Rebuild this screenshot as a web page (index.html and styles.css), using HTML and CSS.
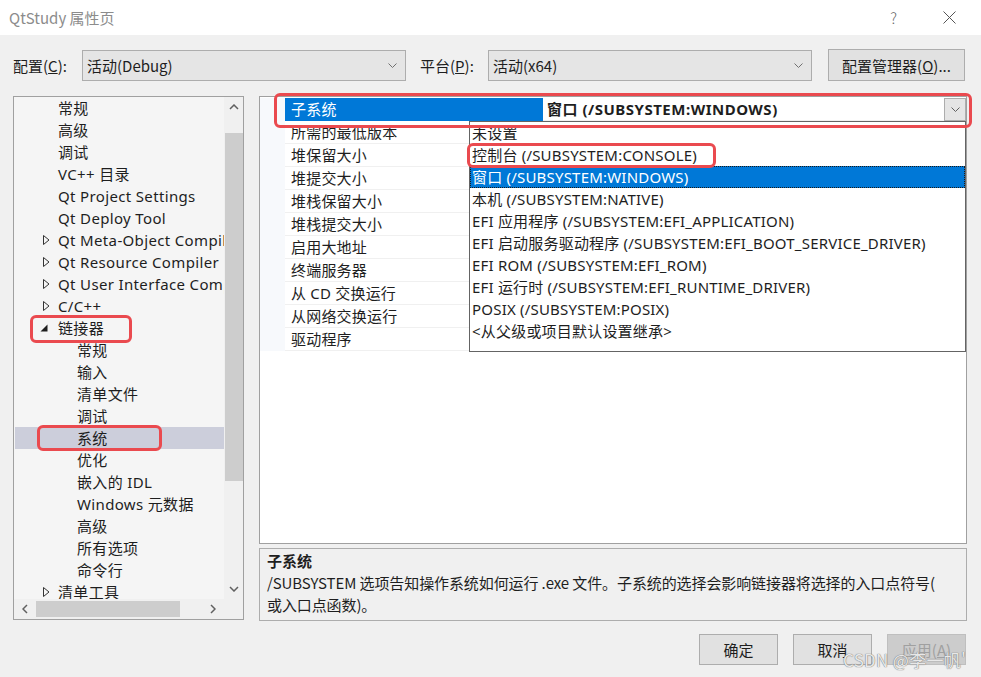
FILE: index.html
```html
<!DOCTYPE html>
<html lang="zh-CN">
<head>
  <meta charset="UTF-8">
  <title>QtStudy 属性页</title>
  <link rel="stylesheet" href="styles.css">
</head>
<body>
<div class="dialog">

  <!-- title bar -->
  <div class="titlebar">
    <span class="title">QtStudy 属性页</span>
    <span class="help">?</span>
    <span class="close">
      <svg width="13" height="13" viewBox="0 0 13 13"><path d="M0.5 0.5L12.5 12.5M12.5 0.5L0.5 12.5" stroke="#555" stroke-width="1" fill="none"/></svg>
    </span>
  </div>

  <!-- configuration / platform -->
  <div class="config-row">
    <label class="lbl lbl-cfg">配置(<u>C</u>):</label>
    <div class="combo">
      <span>活动(Debug)</span>
      <svg class="chev" width="9" height="5" viewBox="0 0 9 5"><polyline points="0.5,0.5 4.5,4.5 8.5,0.5" stroke="#707070" fill="none"/></svg>
    </div>
    <label class="lbl lbl-plat">平台(<u>P</u>):</label>
    <div class="combo">
      <span>活动(x64)</span>
      <svg class="chev" width="9" height="5" viewBox="0 0 9 5"><polyline points="0.5,0.5 4.5,4.5 8.5,0.5" stroke="#707070" fill="none"/></svg>
    </div>
    <button class="btn btn-mgr">配置管理器(<u>O</u>)...</button>
  </div>

  <div class="main">
    <!-- left tree -->
    <div class="tree">
      <ul class="tree-list">
        <li class="l1"><span class="tog"></span>常规</li>
        <li class="l1"><span class="tog"></span>高级</li>
        <li class="l1"><span class="tog"></span>调试</li>
        <li class="l1"><span class="tog"></span>VC++ 目录</li>
        <li class="l1"><span class="tog"></span>Qt Project Settings</li>
        <li class="l1"><span class="tog"></span>Qt Deploy Tool</li>
        <li class="l1"><span class="tog"><svg width="7" height="10" viewBox="0 0 7 10"><polygon points="0.5,0.5 6,5 0.5,9.5" stroke="#333" fill="none"/></svg></span>Qt Meta-Object Compiler</li>
        <li class="l1"><span class="tog"><svg width="7" height="10" viewBox="0 0 7 10"><polygon points="0.5,0.5 6,5 0.5,9.5" stroke="#333" fill="none"/></svg></span>Qt Resource Compiler</li>
        <li class="l1"><span class="tog"><svg width="7" height="10" viewBox="0 0 7 10"><polygon points="0.5,0.5 6,5 0.5,9.5" stroke="#333" fill="none"/></svg></span>Qt User Interface Compiler</li>
        <li class="l1"><span class="tog"><svg width="7" height="10" viewBox="0 0 7 10"><polygon points="0.5,0.5 6,5 0.5,9.5" stroke="#333" fill="none"/></svg></span>C/C++</li>
        <li class="l1"><span class="tog open"><svg width="8" height="8" viewBox="0 0 8 8"><polygon points="7.5,0.5 7.5,7.5 0.5,7.5" fill="#1e1e1e"/></svg></span>链接器</li>
        <li class="l2">常规</li>
        <li class="l2">输入</li>
        <li class="l2">清单文件</li>
        <li class="l2">调试</li>
        <li class="l2 sel">系统</li>
        <li class="l2">优化</li>
        <li class="l2">嵌入的 IDL</li>
        <li class="l2">Windows 元数据</li>
        <li class="l2">高级</li>
        <li class="l2">所有选项</li>
        <li class="l2">命令行</li>
        <li class="l1"><span class="tog"><svg width="7" height="10" viewBox="0 0 7 10"><polygon points="0.5,0.5 6,5 0.5,9.5" stroke="#333" fill="none"/></svg></span>清单工具</li>
      </ul>
      <div class="vscroll">
        <span class="arrow"><svg width="10" height="6" viewBox="0 0 10 6"><polyline points="1,5 5,1 9,5" stroke="#606060" stroke-width="1.5" fill="none"/></svg></span>
        <div class="track"><div class="thumb"></div></div>
        <span class="arrow"><svg width="10" height="6" viewBox="0 0 10 6"><polyline points="1,1 5,5 9,1" stroke="#606060" stroke-width="1.5" fill="none"/></svg></span>
      </div>
      <div class="hscroll">
        <span class="arrow"><svg width="6" height="10" viewBox="0 0 6 10"><polyline points="5,1 1,5 5,9" stroke="#606060" stroke-width="1.5" fill="none"/></svg></span>
        <div class="track"><div class="thumb"></div></div>
        <span class="arrow"><svg width="6" height="10" viewBox="0 0 6 10"><polyline points="1,1 5,5 1,9" stroke="#606060" stroke-width="1.5" fill="none"/></svg></span>
      </div>
      <div class="corner"></div>
    </div>

    <!-- right side -->
    <div class="right">
      <div class="grid-box">
        <div class="grid">
          <div class="row active">
            <span class="gutter"></span>
            <span class="name">子系统</span>
            <span class="val">
              <b>窗口 (/SUBSYSTEM:WINDOWS)</b>
              <span class="drop-btn"><svg width="9" height="5" viewBox="0 0 9 5"><polyline points="0.5,0.5 4.5,4.5 8.5,0.5" stroke="#606060" fill="none"/></svg></span>
            </span>
          </div>
          <div class="row"><span class="gutter"></span><span class="name">所需的最低版本</span><span class="val"></span></div>
          <div class="row"><span class="gutter"></span><span class="name">堆保留大小</span><span class="val"></span></div>
          <div class="row"><span class="gutter"></span><span class="name">堆提交大小</span><span class="val"></span></div>
          <div class="row"><span class="gutter"></span><span class="name">堆栈保留大小</span><span class="val"></span></div>
          <div class="row"><span class="gutter"></span><span class="name">堆栈提交大小</span><span class="val"></span></div>
          <div class="row"><span class="gutter"></span><span class="name">启用大地址</span><span class="val"></span></div>
          <div class="row"><span class="gutter"></span><span class="name">终端服务器</span><span class="val"></span></div>
          <div class="row"><span class="gutter"></span><span class="name">从 CD 交换运行</span><span class="val"></span></div>
          <div class="row"><span class="gutter"></span><span class="name">从网络交换运行</span><span class="val"></span></div>
          <div class="row"><span class="gutter"></span><span class="name">驱动程序</span><span class="val"></span></div>
        </div>

        <!-- open dropdown list -->
        <ul class="dropdown">
          <li>未设置</li>
          <li>控制台 (/SUBSYSTEM:CONSOLE)</li>
          <li class="cur">窗口 (/SUBSYSTEM:WINDOWS)</li>
          <li>本机 (/SUBSYSTEM:NATIVE)</li>
          <li>EFI 应用程序 (/SUBSYSTEM:EFI_APPLICATION)</li>
          <li>EFI 启动服务驱动程序 (/SUBSYSTEM:EFI_BOOT_SERVICE_DRIVER)</li>
          <li>EFI ROM (/SUBSYSTEM:EFI_ROM)</li>
          <li>EFI 运行时 (/SUBSYSTEM:EFI_RUNTIME_DRIVER)</li>
          <li>POSIX (/SUBSYSTEM:POSIX)</li>
          <li>&lt;从父级或项目默认设置继承&gt;</li>
        </ul>
      </div>

      <div class="desc">
        <div class="desc-title">子系统</div>
        <div class="desc-text">/SUBSYSTEM 选项告知操作系统如何运行 .exe 文件。子系统的选择会影响链接器将选择的入口点符号(<br>或入口点函数)。</div>
      </div>
    </div>
  </div>

  <div class="buttons">
    <button class="btn">确定</button>
    <button class="btn">取消</button>
    <button class="btn disabled">应用(<u>A</u>)</button>
  </div>

  <!-- annotation marks -->
  <span class="mark mark-row"></span>
  <span class="mark mark-console"></span>
  <span class="mark mark-linker"></span>
  <span class="mark mark-system"></span>
  <span class="watermark">CSDN @李一帆'</span>
</div>
</body>
</html>
```

FILE: styles.css
```css
body {
  margin: 0;
  font-family: "Noto Sans", "Noto Sans CJK SC", sans-serif;
  font-size: 15px;
  color: #1e1e1e;
  background: #f0f0f0;
}

.dialog {
  position: relative;
  width: 981px;
  height: 677px;
  overflow: hidden;
  background: #f0f0f0;
}

/* Title bar */
.titlebar {
  height: 35px;
  background: #fff;
  display: flex;
  align-items: center;
  padding-left: 9px;
  font-family: "Noto Sans CJK SC", sans-serif;
}

.title {
  flex: 1;
  color: #8c8c8c;
  font-size: 15px;
}

.help {
  color: #666;
  font-size: 15px;
  font-weight: 300;
  margin-right: 46px;
}

.close {
  display: flex;
  margin-right: 25px;
}

/* Config row */
.config-row {
  height: 61px;
  box-sizing: border-box;
  padding: 15px 0 0 13px;
  display: flex;
  align-items: flex-start;
  font-family: "Noto Sans CJK SC", sans-serif;
}

.lbl {
  line-height: 31px;
}

.lbl-cfg {
  width: 69px;
}

.lbl-plat {
  width: 68px;
  margin-left: 14px;
}

.combo {
  width: 324px;
  height: 31px;
  box-sizing: border-box;
  border: 1px solid #adadad;
  background: #e5e5e5;
  display: flex;
  align-items: center;
  justify-content: space-between;
  padding: 0 8px 0 4px;
}

.btn {
  font-family: "Noto Sans CJK SC", sans-serif;
  font-size: 15px;
  color: #1e1e1e;
  background: #e1e1e1;
  border: 1px solid #adadad;
  width: 79px;
  height: 31px;
  padding: 0;
}

.btn-mgr {
  width: 137px;
  height: 32px;
  margin: -1px 0 0 16px;
}

.btn.disabled {
  color: #a0a0a0;
  background: #cccccc;
  border-color: #bfbfbf;
}

/* Main area */
.main {
  display: flex;
  padding-left: 13px;
  height: 525px;
}

.tree {
  width: 231px;
  height: 524px;
  box-sizing: border-box;
  border: 1px solid #a0a0a0;
  background: #f5f5f5;
  display: grid;
  grid-template-columns: 1fr 19px;
  grid-template-rows: 1fr 20px;
}

.tree-list {
  list-style: none;
  margin: 0;
  padding: 0;
  overflow: hidden;
  white-space: nowrap;
  letter-spacing: 0.35px;
}

.tree-list li {
  height: 22px;
  line-height: 22px;
  display: flex;
  align-items: center;
}

.tree-list .l1 {
  padding-left: 29px;
}

.tree-list .l2 {
  padding-left: 63px;
}

.tree-list .sel {
  background: #cccedb;
  margin-left: 1px;
  padding-left: 62px;
}

.tog {
  width: 15px;
  flex: none;
  display: flex;
  align-items: center;
}

.tog.open {
  margin-left: -3px;
  width: 18px;
}

.vscroll {
  background: #f0f0f0;
  display: flex;
  flex-direction: column;
  align-items: center;
}

.vscroll .arrow {
  height: 20px;
  display: flex;
  align-items: center;
}

.vscroll .track {
  flex: 1;
  width: 100%;
  padding-top: 16px;
}

.vscroll .thumb {
  height: 348px;
  background: #cdcdcd;
  margin-left: 1px;
}

.hscroll {
  background: #f0f0f0;
  display: flex;
  align-items: center;
}

.hscroll .arrow {
  width: 22px;
  display: flex;
  justify-content: center;
}

.hscroll .track {
  flex: 1;
}

.hscroll .thumb {
  width: 144px;
  height: 16px;
  background: #cdcdcd;
}

.corner {
  background: #f0f0f0;
}

/* Right side */
.right {
  margin-left: 15px;
  width: 708px;
  display: flex;
  flex-direction: column;
}

.grid-box {
  position: relative;
  height: 448px;
  box-sizing: border-box;
  border: 1px solid #a0a0a0;
  background: #fff;
  padding-top: 1px;
}

.row {
  display: flex;
  height: 23px;
  line-height: 22px;
}

.gutter {
  width: 25px;
  flex: none;
  background: #f7f9fc;
}

.name {
  width: 258px;
  flex: none;
  padding-left: 6px;
  box-sizing: border-box;
  border-bottom: 1px solid #f0f0f0;
  letter-spacing: 0.2px;
}

.val {
  flex: 1;
  padding-left: 4px;
  border-bottom: 1px solid #f0f0f0;
  display: flex;
  justify-content: space-between;
}

.val b {
  letter-spacing: 0.5px;
}

.row.active .name {
  background: #0078d7;
  color: #fff;
  border-bottom-color: #0078d7;
}

.drop-btn {
  width: 22px;
  height: 23px;
  box-sizing: border-box;
  border: 1px solid #adadad;
  background: #e5e5e5;
  display: flex;
  align-items: center;
  justify-content: center;
}

.dropdown {
  position: absolute;
  left: 209px;
  top: 24px;
  width: 497px;
  height: 231px;
  box-sizing: border-box;
  margin: 0;
  padding: 0;
  list-style: none;
  border: 1px solid #646464;
  background: #fff;
  white-space: nowrap;
  letter-spacing: 0.2px;
}

.dropdown li {
  height: 22px;
  line-height: 22px;
  padding-left: 2px;
}

.dropdown li.cur {
  background: #0078d7;
  color: #fff;
  outline: 1px dotted #1a1a1a;
  outline-offset: -1px;
}

.desc {
  margin-top: 4px;
  height: 73px;
  box-sizing: border-box;
  border: 1px solid #adadad;
  padding: 0 7px;
  font-family: "Noto Sans CJK SC", sans-serif;
  line-height: 22px;
}

.desc-title {
  font-weight: bold;
  margin-top: 1px;
}

.desc-text {
  letter-spacing: -0.1px;
}

/* Buttons */
.buttons {
  display: flex;
  justify-content: flex-end;
  gap: 15px;
  padding: 13px 15px 0 0;
}

/* Red annotation boxes */
.mark {
  position: absolute;
  border: 3px solid #ea4a4f;
  border-radius: 6px;
  box-sizing: border-box;
}

.mark-row {
  left: 274px;
  top: 93px;
  width: 698px;
  height: 35px;
}

.mark-console {
  left: 467px;
  top: 143px;
  width: 249px;
  height: 25px;
}

.mark-linker {
  left: 30px;
  top: 315px;
  width: 102px;
  height: 28px;
}

.mark-system {
  left: 37px;
  top: 425px;
  width: 125px;
  height: 26px;
}

.watermark {
  position: absolute;
  left: 843px;
  top: 647px;
  font-family: "Noto Sans CJK SC", sans-serif;
  font-size: 17px;
  letter-spacing: 0.3px;
  color: rgba(248, 248, 248, 0.9);
  text-shadow: 0 0 1px #777, 0 0 1px #777;
}
```
